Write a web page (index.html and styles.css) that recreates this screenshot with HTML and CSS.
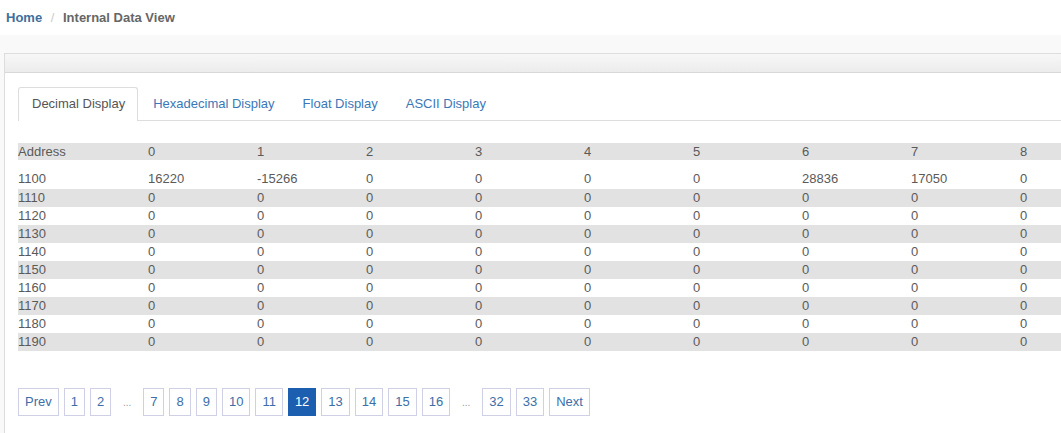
FILE: index.html
```html
<!DOCTYPE html>
<html>
<head>
<meta charset="utf-8">
<link rel="stylesheet" href="styles.css">
</head>
<body>
<div class="crumbs">
  <a class="crumb-home">Home</a>
  <span class="crumb-sep">/</span>
  <span class="crumb-cur">Internal Data View</span>
</div>
<div class="content">
  <div class="panel">
    <div class="panel-head"></div>
    <div class="panel-body">
      <ul class="tabs">
        <li class="tab active">Decimal Display</li>
        <li class="tab">Hexadecimal Display</li>
        <li class="tab">Float Display</li>
        <li class="tab">ASCII Display</li>
      </ul>
      <table class="grid">
        <colgroup>
          <col class="c-addr"><col class="c"><col class="c"><col class="c"><col class="c"><col class="c"><col class="c"><col class="c"><col class="c"><col class="c-last">
        </colgroup>
        <thead>
          <tr><th>Address</th><th>0</th><th>1</th><th>2</th><th>3</th><th>4</th><th>5</th><th>6</th><th>7</th><th>8</th></tr>
        </thead>
        <tbody>
          <tr class="first"><td>1100</td><td>16220</td><td>-15266</td><td>0</td><td>0</td><td>0</td><td>0</td><td>28836</td><td>17050</td><td>0</td></tr>
          <tr class="odd"><td>1110</td><td>0</td><td>0</td><td>0</td><td>0</td><td>0</td><td>0</td><td>0</td><td>0</td><td>0</td></tr>
          <tr><td>1120</td><td>0</td><td>0</td><td>0</td><td>0</td><td>0</td><td>0</td><td>0</td><td>0</td><td>0</td></tr>
          <tr class="odd"><td>1130</td><td>0</td><td>0</td><td>0</td><td>0</td><td>0</td><td>0</td><td>0</td><td>0</td><td>0</td></tr>
          <tr><td>1140</td><td>0</td><td>0</td><td>0</td><td>0</td><td>0</td><td>0</td><td>0</td><td>0</td><td>0</td></tr>
          <tr class="odd"><td>1150</td><td>0</td><td>0</td><td>0</td><td>0</td><td>0</td><td>0</td><td>0</td><td>0</td><td>0</td></tr>
          <tr><td>1160</td><td>0</td><td>0</td><td>0</td><td>0</td><td>0</td><td>0</td><td>0</td><td>0</td><td>0</td></tr>
          <tr class="odd"><td>1170</td><td>0</td><td>0</td><td>0</td><td>0</td><td>0</td><td>0</td><td>0</td><td>0</td><td>0</td></tr>
          <tr><td>1180</td><td>0</td><td>0</td><td>0</td><td>0</td><td>0</td><td>0</td><td>0</td><td>0</td><td>0</td></tr>
          <tr class="odd"><td>1190</td><td>0</td><td>0</td><td>0</td><td>0</td><td>0</td><td>0</td><td>0</td><td>0</td><td>0</td></tr>
        </tbody>
      </table>
      <div class="pager">
        <a class="pg">Prev</a>
        <a class="pg">1</a>
        <a class="pg">2</a>
        <span class="pg-gap">...</span>
        <a class="pg">7</a>
        <a class="pg">8</a>
        <a class="pg">9</a>
        <a class="pg">10</a>
        <a class="pg">11</a>
        <a class="pg active">12</a>
        <a class="pg">13</a>
        <a class="pg">14</a>
        <a class="pg">15</a>
        <a class="pg">16</a>
        <span class="pg-gap">...</span>
        <a class="pg">32</a>
        <a class="pg">33</a>
        <a class="pg">Next</a>
      </div>
    </div>
  </div>
</div>
</body>
</html>
```
FILE: styles.css
```css
html, body {
  margin: 0;
  padding: 0;
}
body {
  width: 1061px;
  height: 433px;
  overflow: hidden;
  background: #ffffff;
  font-family: "Liberation Sans", Arial, sans-serif;
  font-size: 13px;
  color: #555;
}
.crumbs {
  height: 35px;
  box-sizing: border-box;
  padding: 10px 0 0 6px;
  font-weight: bold;
  font-size: 13px;
  background: #fff;
}
.crumb-home {
  color: #3f6f9c;
}
.crumb-sep {
  color: #ccc;
  font-weight: normal;
  margin: 0 5px;
}
.crumb-cur {
  color: #666;
}
.content {
  background: #f9f9f9;
  padding: 18px 0 0 4px;
  height: 398px;
  box-sizing: border-box;
}
.panel {
  background: #fff;
  border-left: 1px solid #ddd;
  border-top: 1px solid #ddd;
  height: 100%;
}
.panel-head {
  height: 18px;
  background: linear-gradient(#f7f7f7, #ececec);
  border-bottom: 1px solid #d8d8d8;
}
.panel-body {
  padding: 14px 0 0 13px;
}
.tabs {
  list-style: none;
  margin: 0;
  padding: 0;
  display: flex;
  border-bottom: 1px solid #ddd;
  height: 33px;
}
.tab {
  padding: 0 12px 0 13px;
  line-height: 32px;
  color: #3b78b8;
  border: 1px solid transparent;
  border-bottom: none;
  margin-right: 1px;
}
.tab.active {
  color: #555;
  background: #fff;
  border-color: #ddd;
  border-radius: 3px 3px 0 0;
  height: 33px;
}
.grid {
  margin-top: 22px;
  border-collapse: collapse;
  table-layout: fixed;
  width: 1043px;
  color: #5a5a5a;
}
.c-addr { width: 130px; }
.c { width: 109px; }
.c-last { width: 41px; }
.grid th {
  font-weight: normal;
  text-align: left;
  background: #e2e2e2;
  height: 17px;
  padding: 0;
  line-height: 17px;
}
.grid td {
  padding: 0;
  height: 18px;
  line-height: 18px;
}
.grid tr.first td {
  height: 29px;
  vertical-align: bottom;
  line-height: 20px;
}
.grid tr.odd td {
  background: #e2e2e2;
}
.pager {
  display: flex;
  gap: 5px;
  margin-top: 37px;
  align-items: center;
}
.pg {
  box-sizing: border-box;
  height: 28px;
  min-width: 21px;
  padding: 0 6px;
  border: 1px solid #cfcfe6;
  color: #3d6ea8;
  line-height: 26px;
  text-align: center;
  font-size: 13px;
}
.pg.active {
  background: #1c5fb0;
  border-color: #1c5fb0;
  color: #fff;
}
.pg-gap {
  width: 22px;
  text-align: center;
  color: #999;
  font-size: 10px;
}
```
